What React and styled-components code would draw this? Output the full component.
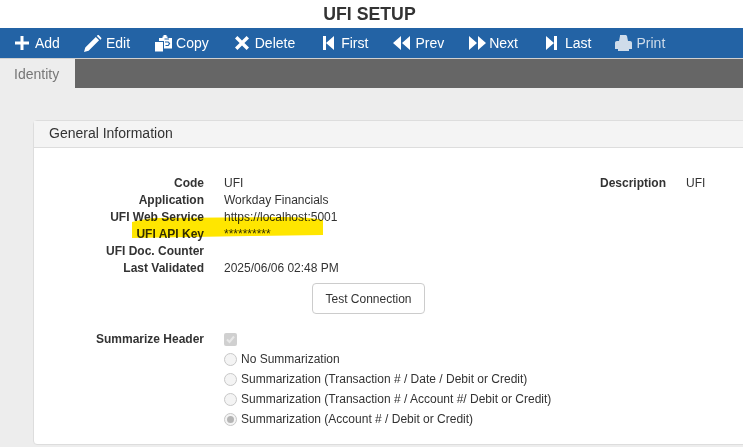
import React from "react";
import styled, { createGlobalStyle } from "styled-components";

const Global = createGlobalStyle`
  html, body { margin: 0; padding: 0; background: #ededed; overflow: hidden; }
  body { font-family: "Liberation Sans", Arial, sans-serif; width: 743px; height: 447px; }
`;
const Page = styled.div`width: 743px; height: 447px; overflow: hidden; position: relative;`;
const TitleBar = styled.h1`
  margin: 0; height: 28px; background: #fff; text-align: center; padding-right: 4px;
  font-size: 17.7px; line-height: 29px; font-weight: 700; color: #333;
`;
const Toolbar = styled.nav`
  display: flex; align-items: center; height: 30px; padding-left: 15px;
  background: #2363a5; border-bottom: 1px solid #d0d0d0;
`;
const ToolItem = styled.span`
  display: inline-flex; align-items: center; gap: ${p => p.$gap}px;
  margin-right: ${p => p.$after}px; font-size: 14px; line-height: 30px;
  color: ${p => (p.$disabled ? "#cfdcea" : "#fff")};
  svg { display: block; fill: currentColor; flex: none; }
`;
const TabStrip = styled.div`display: flex; height: 29px; background: #666;`;
const Tab = styled.div`
  width: 75px; box-sizing: border-box; padding-left: 14px; background: #ededed;
  color: #777; font-size: 14px; line-height: 30px;
`;
const Content = styled.main`padding: 32px 0 0 33px; width: 800px; box-sizing: border-box;`;
const Panel = styled.section`
  position: relative; background: #fff; border: 1px solid #ddd; border-radius: 4px;
  height: 325px; box-sizing: border-box;
`;
const PanelHead = styled.header`
  height: 26px; padding-left: 15px; background: #f4f4f4; border-bottom: 1px solid #ddd;
  font-size: 14px; line-height: 24px; color: #333;
`;
const PanelBody = styled.div`padding: 27px 0 0 0; font-size: 12px; color: #333;`;
const TopRow = styled.div`display: flex;`;
const Fields = styled.div`
  display: grid; grid-template-columns: 170px auto; column-gap: 20px; grid-auto-rows: 17px;
  line-height: 17px; width: 566px;
`;
const Label = styled.div`text-align: right; font-weight: 700; color: #333;`;
const Value = styled.div`color: #333;`;
const Desc = styled.div`
  display: flex; gap: 20px; line-height: 17px;
`;
const ButtonRow = styled.div`padding: 6px 0 0 278px;`;
const Btn = styled.button`
  width: 113px; height: 31px; background: #fff; border: 1px solid #ccc; border-radius: 4px;
  font: 12px "Liberation Sans", Arial, sans-serif; color: #333; padding: 0;
`;
const Summary = styled.div`
  display: grid; grid-template-columns: 170px auto; column-gap: 20px; margin-top: 18px;
`;
const Options = styled.div`display: flex; flex-direction: column;`;
const CheckBox = styled.span`
  display: flex; align-items: center; justify-content: center;
  width: 13px; height: 13px; background: #d0d0d0; border-radius: 2px; margin: 1px 0 3px;
  svg { display: block; }
`;
const RadioRow = styled.label`
  display: flex; align-items: center; gap: 4px; height: 20px; line-height: 20px; color: #333;
`;
const Radio = styled.span`
  width: 13px; height: 13px; box-sizing: border-box; border-radius: 50%; background: #f4f4f4;
  border: 1px solid #c8c8c8; display: flex; align-items: center; justify-content: center;
  &::after { content: ""; width: 7px; height: 7px; border-radius: 50%; background: ${p => (p.$on ? "#b5b5b5" : "transparent")}; }
`;
const Highlight = styled.svg`
  position: absolute; left: 131px; top: 216px; width: 193px; height: 23px;
  mix-blend-mode: multiply; pointer-events: none;
`;

const Plus = () => <svg width="14" height="14" viewBox="0 0 14 14"><path d="M5.500 0h3v5.500H14v3H8.500V14h-3V8.500H0v-3h5.500z"/></svg>;
const Pencil = () => <svg width="18" height="17" viewBox="0 0 18 17"><path d="M0 17l1.300-4.600L11.800 2l3.300 3.300L4.600 15.700zM12.800 1l.7-.7c.4-.3 1-.3 1.300 0l2.400 2.400c.3.400.3.900 0 1.300l-.7.700z"/></svg>;
const Copy = () => <svg width="17" height="17" viewBox="0 0 17 17"><path d="M0 7h8v9.500H0z"/><path d="M4 3h3.500V1.500h1V0h3v1.500h1V3H17v10.500H9V6H4z"/><path fill="#2363a5" d="M9.500 3.400h4.500v1H9.500zM10 6.500h3.500l1.800 2-1.800 2.500h-3v-1h2.500l.8-1.400-.8-1.100H10z"/></svg>;
const Times = () => <svg width="14" height="14" viewBox="0 0 14 14"><path d="M2.400 0L7 4.600 11.600 0 14 2.400 9.400 7l4.600 4.600-2.400 2.400L7 9.400 2.400 14 0 11.600 4.600 7 0 2.400z"/></svg>;
const First = () => <svg width="11" height="14" viewBox="0 0 11 14"><path d="M0 0h3v14H0zM3 7l8-7v14z"/></svg>;
const Prev = () => <svg width="17" height="14" viewBox="0 0 17 14"><path d="M0 7l8-7v14zM9 7l8-7v14z"/></svg>;
const Next = () => <svg width="17" height="14" viewBox="0 0 17 14"><path d="M17 7L9 0v14zM8 7L0 0v14z"/></svg>;
const Last = () => <svg width="11" height="14" viewBox="0 0 11 14"><path d="M8 0h3v14H8zM8 7L0 0v14z"/></svg>;
const Print = () => <svg width="17" height="16" viewBox="0 0 17 16"><path d="M5 0h6l1 1 1 5h2c1.200 0 2 .800 2 2v6h-3v2H3v-2H0V8c0-1.200.800-2 2-2h2l1-5z"/></svg>;

const tools = [
  { label: "Add", Icon: Plus, gap: 6, after: 24 },
  { label: "Edit", Icon: Pencil, gap: 4, after: 25 },
  { label: "Copy", Icon: Copy, gap: 4, after: 26 },
  { label: "Delete", Icon: Times, gap: 6, after: 28 },
  { label: "First", Icon: First, gap: 7, after: 25 },
  { label: "Prev", Icon: Prev, gap: 5, after: 25 },
  { label: "Next", Icon: Next, gap: 3, after: 28 },
  { label: "Last", Icon: Last, gap: 8, after: 24 },
  { label: "Print", Icon: Print, gap: 4, after: 0, disabled: true },
];
const fields = [
  ["Code", "UFI"],
  ["Application", "Workday Financials"],
  ["UFI Web Service", "https://localhost:5001"],
  ["UFI API Key", "**********"],
  ["UFI Doc. Counter", ""],
  ["Last Validated", "2025/06/06 02:48 PM"],
];
const options = [
  "No Summarization",
  "Summarization (Transaction # / Date / Debit or Credit)",
  "Summarization (Transaction # / Account #/ Debit or Credit)",
  "Summarization (Account # / Debit or Credit)",
];

export default function App() {
  return (
    <Page>
      <Global />
      <TitleBar>UFI SETUP</TitleBar>
      <Toolbar>
        {tools.map(({ label, Icon, gap, after, disabled }) => (
          <ToolItem key={label} $gap={gap} $after={after} $disabled={disabled}>
            <Icon />
            {label}
          </ToolItem>
        ))}
      </Toolbar>
      <TabStrip><Tab>Identity</Tab></TabStrip>
      <Content>
        <Panel>
          <PanelHead>General Information</PanelHead>
          <PanelBody>
            <TopRow>
              <Fields>
                {fields.map(([l, v]) => (
                  <React.Fragment key={l}>
                    <Label>{l}</Label>
                    <Value>{v}</Value>
                  </React.Fragment>
                ))}
              </Fields>
              <Desc><Label>Description</Label><Value>UFI</Value></Desc>
            </TopRow>
            <ButtonRow><Btn>Test Connection</Btn></ButtonRow>
            <Summary>
              <Label>Summarize Header</Label>
              <Options>
                <CheckBox>
                  <svg width="11" height="11" viewBox="0 0 11 11"><path d="M2 5.500l2.500 2.500L9 2.500" fill="none" stroke="#e8e8e8" strokeWidth="2"/></svg>
                </CheckBox>
                {options.map((o, i) => (
                  <RadioRow key={o}><Radio $on={i === 3} />{o}</RadioRow>
                ))}
              </Options>
            </Summary>
          </PanelBody>
        </Panel>
      </Content>
      <Highlight viewBox="0 0 193 23">
        <path d="M1 6 Q8 4 22 2 L150 1 Q180 1 192 4 L192 19 L120 20 L1 22 Z" fill="#ffe600" />
      </Highlight>
    </Page>
  );
}
